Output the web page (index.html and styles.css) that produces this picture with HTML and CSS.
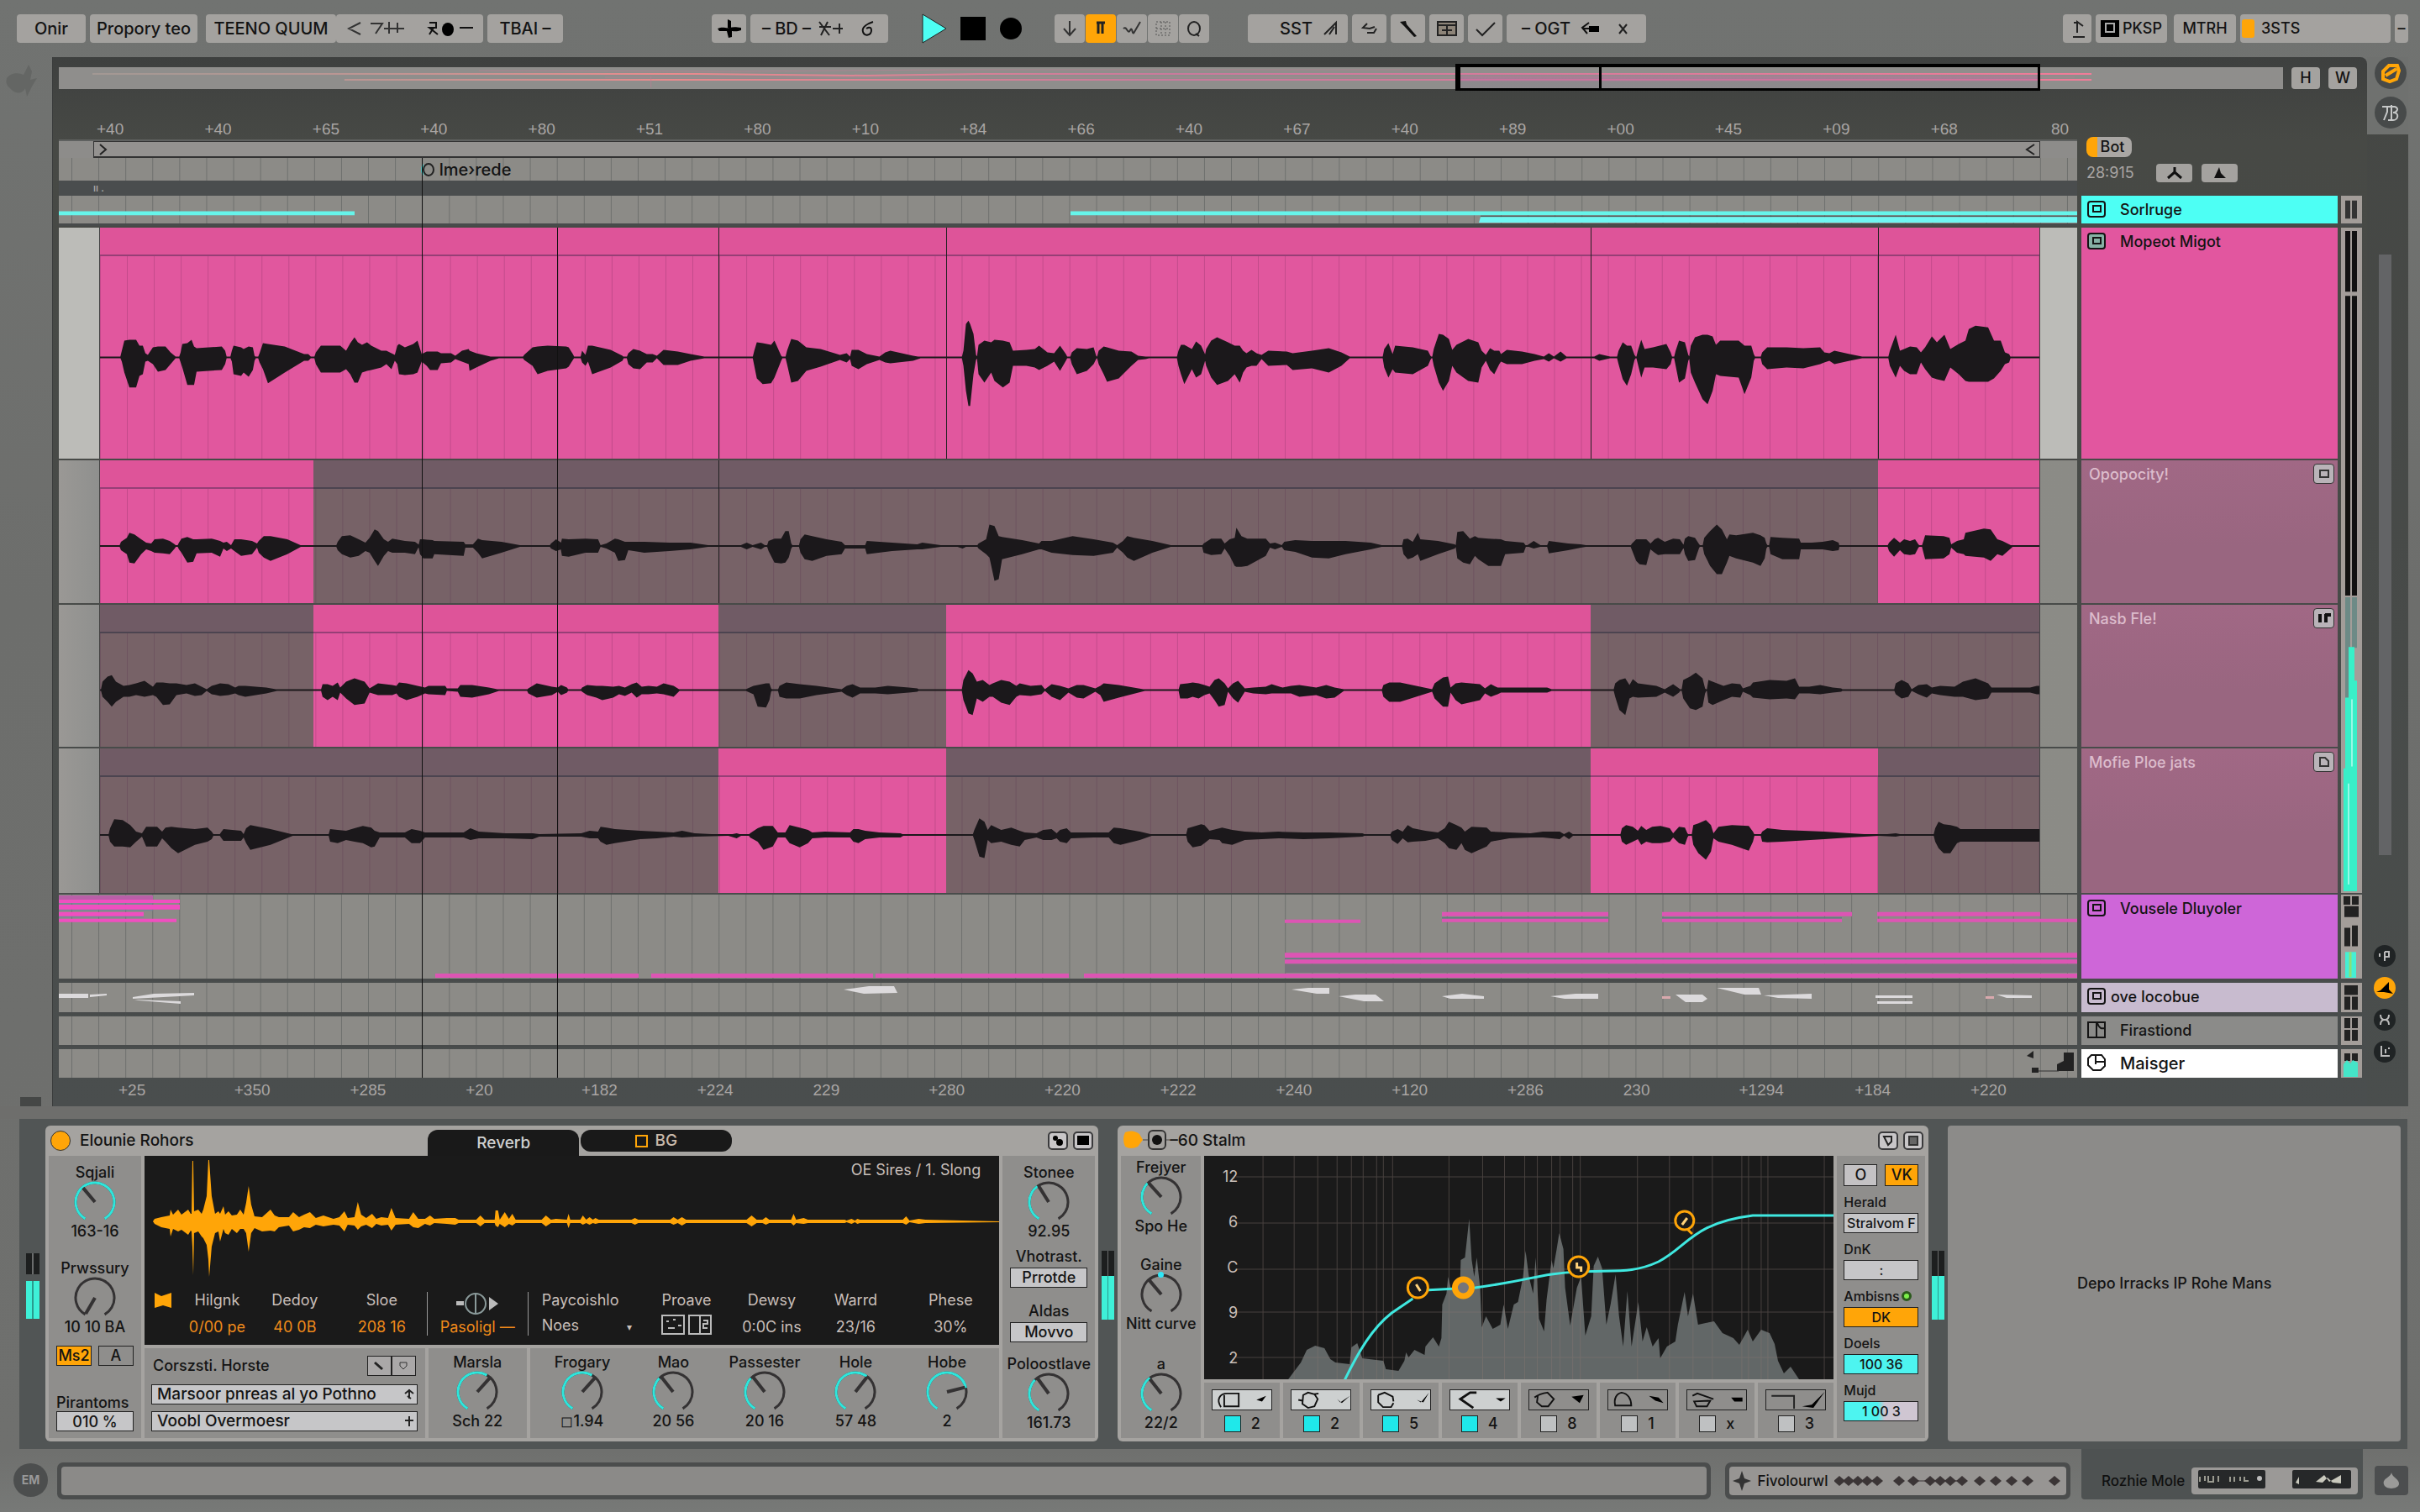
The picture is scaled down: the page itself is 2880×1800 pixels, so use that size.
FILE: index.html
```html
<!DOCTYPE html>
<html lang="en">
<head>
    <meta charset="UTF-8">
    <meta name="viewport" content="width=device-width, initial-scale=1.0">
    <title>Arrangement</title>
    <link rel="stylesheet" href="styles.css">
</head>
<body>
    <svg class="defs" aria-hidden="true">
        <symbol id="knob" viewBox="0 0 50 50">
            <circle class="knob-track" cx="25" cy="25" r="23" pathLength="360" transform="rotate(120 25 25)"/>
            <circle class="knob-value" cx="25" cy="25" r="23" pathLength="360" transform="rotate(120 25 25)"/>
            <line class="knob-hand" x1="25" y1="25" x2="25" y2="3"/>
        </symbol>
        <symbol id="clip-icon" viewBox="0 0 24 22">
            <rect x="2" y="2" width="20" height="18" rx="3" fill="none" stroke="currentColor" stroke-width="2"/>
            <rect x="8" y="7" width="9" height="7" fill="none" stroke="currentColor" stroke-width="2"/>
        </symbol>
    </svg>

    <header class="toolbar">
        <div class="group">
            <button class="btn w82">Onir</button>
            <button class="btn w128">Propory teo</button>
            <button class="btn w155 spaced">TEENO QUUM</button>
            <button class="btn w175 joined">
                <svg width="150" height="24" viewBox="0 0 150 24"><path d="M16 5 2 12l14 7M28 6h14l-8 12M50 4v14M44 12h24M60 5v12" fill="none" stroke="#333" stroke-width="2"/><path d="M98 5h8v6h-8l10 8M98 19l5-8" fill="none" stroke="#111" stroke-width="2"/><ellipse cx="120" cy="13" rx="7" ry="8"/><path d="M134 11h16" stroke="#111" stroke-width="2"/></svg>
            </button>
            <button class="btn w90">TBAI –</button>
        </div>
        <div class="group transport">
            <button class="btn w41" aria-label="Add"><svg width="30" height="22" viewBox="0 0 30 22"><path d="M1 11c6-3 10 0 14-1s8-1 14 0v3c-5 2-9 1-11 1v7l-4 1-2-8H3zM13 0l4 2v8h-4z"/></svg></button>
            <button class="btn w164">– BD –
                <svg width="70" height="24" viewBox="0 0 70 24"><path d="M2 4 14 20M12 4 4 20M2 10h14M18 12h12M26 6v12" fill="none" stroke="#222" stroke-width="2"/><path d="M66 4c-6 2-14 6-12 12s10 4 10-2-6-2-6-2" fill="none" stroke="#111" stroke-width="2"/></svg>
            </button>
            <button class="bare play" aria-label="Play"><svg width="30" height="36" viewBox="0 0 30 36"><path d="M1 1v34l28-17z" fill="#4dfff4" stroke="#222"/></svg></button>
            <button class="bare" aria-label="Stop"><svg width="30" height="28" viewBox="0 0 30 28"><path d="M0 0h30v28H0z"/></svg></button>
            <button class="bare" aria-label="Record"><svg width="28" height="26" viewBox="0 0 28 26"><circle cx="14" cy="13" r="13"/></svg></button>
        </div>
        <div class="group tight tools">
            <button class="btn w36" aria-label="Down"><svg width="20" height="24" viewBox="0 0 20 24"><path d="M10 3v17M3 12l7 8 7-8" fill="none" stroke="#333" stroke-width="2"/></svg></button>
            <button class="btn w36 on" aria-label="Loop"><svg width="16" height="24" viewBox="0 0 16 24"><path d="M3 5h10M5 5v13M10 5v13" stroke="#222" stroke-width="3"/></svg></button>
            <button class="btn w36" aria-label="Automation"><svg width="24" height="20" viewBox="0 0 24 20"><path d="M2 10c4-4 5 8 8 2s2 8 5 2l7-12" fill="none" stroke="#333" stroke-width="2"/></svg></button>
            <button class="btn w36" aria-label="Grid"><svg width="20" height="20" viewBox="0 0 20 20"><path d="M2 2h16v16H2zM2 10h16M8 2v16M13 2v16" fill="none" stroke="#555" stroke-dasharray="2 2"/></svg></button>
            <button class="btn w36" aria-label="Zoom"><svg width="22" height="24" viewBox="0 0 22 24"><ellipse cx="11" cy="12" rx="7" ry="8" fill="none" stroke="#222" stroke-width="2"/><path d="m13 18 4 3" stroke="#222" stroke-width="2"/></svg></button>
        </div>
        <div class="group modes">
            <button class="btn w119 end">SST <svg width="22" height="20" viewBox="0 0 22 20"><path d="M2 17 16 3v14M8 17 14 8" fill="none" stroke="#222" stroke-width="2"/></svg></button>
            <button class="btn w41" aria-label="Swap"><svg width="26" height="20" viewBox="0 0 26 20"><path d="M10 4 5 9l8 1 6-2M10 15h8l3-5" fill="none" stroke="#222" stroke-width="2"/></svg></button>
            <button class="btn w41" aria-label="Draw"><svg width="24" height="22" viewBox="0 0 24 22"><path d="m2 3 7-1 1 4 12 14-3 1L7 8z" fill="#111"/></svg></button>
            <button class="btn w41" aria-label="Keys"><svg width="26" height="20" viewBox="0 0 26 20"><path d="M2 2h22v16H2z" fill="#8d8478" stroke="#222" stroke-width="2"/><path d="M2 6h22M13 6v12M7 12h12" fill="none" stroke="#222" stroke-width="2"/></svg></button>
            <button class="btn w41" aria-label="Accept"><svg width="26" height="20" viewBox="0 0 26 20"><path d="m2 11 7 7L24 3" fill="none" stroke="#222" stroke-width="2"/></svg></button>
            <button class="btn w166">– OGT
                <svg width="64" height="20" viewBox="0 0 64 20"><path d="m14 3-8 6 6 7M6 10h14" fill="none" stroke="#111" stroke-width="2"/><path d="M14 7h12v7H14z"/><path d="m50 5 9 11M59 5l-9 11" stroke="#222" stroke-width="2"/></svg>
            </button>
        </div>
        <div class="group right">
            <button class="btn w34" aria-label="Metronome"><svg width="22" height="24" viewBox="0 0 22 24"><path d="M6 22h14M11 17V4l7 5M7 5h5" fill="none" stroke="#222" stroke-width="2"/></svg></button>
            <button class="btn w85"><svg width="22" height="20" viewBox="0 0 22 20"><path d="M0 0h22v20H0z"/><path d="M6 4h10v10H6z" fill="none" stroke="#aaa" stroke-width="2"/></svg>PKSP</button>
            <button class="btn w74 spaced-sm">MTRH</button>
            <button class="btn w179"><i class="lamp"></i>3STS</button>
            <button class="btn w16">–</button>
        </div>
    </header>

    <main class="workspace">
        <aside class="gutter">
            <svg width="40" height="48" viewBox="0 0 40 48"><path d="M2 18c6-8 16-6 20-4l6-12 4 8-2 10 8-2-6 10-6 12-2-10c-4 8-12 6-16 2S0 26 2 18z" fill="#646664"/></svg>
            <i></i>
        </aside>
        <section class="arrange">
            <div class="overview-row">
                <div class="overview">
                    <svg viewBox="0 0 2648 24" preserveAspectRatio="none">
                        <defs><linearGradient id="ov" gradientUnits="userSpaceOnUse" x1="0" y1="0" x2="2420" y2="0"><stop offset="0" stop-color="#b8a79e" stop-opacity=".4"/><stop offset=".3" stop-color="#ea8a8d"/><stop offset=".55" stop-color="#c87a9c"/><stop offset="1" stop-color="#f07c98"/></linearGradient></defs>
                        <path d="M40 8H760l200 2 140-2h1320" stroke="url(#ov)" stroke-width="2" fill="none"/>
                        <path d="M340 15H2420" stroke="url(#ov)" stroke-width="2" fill="none"/>
                        <path d="M500 4l300 1 260-2h540M650 12h1750M705 11v13" stroke="#bd7f95" fill="none" opacity=".6"/>
                    </svg>
                    <div class="view-box"></div>
                </div>
                <button class="btn hw">H</button>
                <button class="btn hw">W</button>
            </div>

            <div class="timeline">
                <div class="time-left">
                    <div class="ruler top">
                        <span>+40</span><span>+40</span><span>+65</span><span>+40</span><span>+80</span><span>+51</span><span>+80</span><span>+10</span><span>+84</span><span>+66</span><span>+40</span><span>+67</span><span>+40</span><span>+89</span><span>+00</span><span>+45</span><span>+09</span><span>+68</span><span>80</span>
                    </div>
                    <div class="loop-row"><div class="loop"><svg width="14" height="14" viewBox="0 0 14 14"><path d="m3 1 7 6-7 6" fill="none" stroke="#222" stroke-width="2"/></svg><svg width="14" height="14" viewBox="0 0 14 14"><path d="m12 1-9 6 9 6" fill="none" stroke="#222" stroke-width="2"/></svg></div></div>
                    <div class="marker-row grid"><div class="marker"><svg width="16" height="18" viewBox="0 0 16 18"><path d="M3 2a9 9 0 0 0 0 14z" fill="#4fc0bc"/><ellipse cx="9" cy="9" rx="6" ry="7" fill="none" stroke="#222" stroke-width="2"/></svg>lme›rede</div></div>
                    <div class="spacer">ıı .</div>
                </div>
                <div class="time-right">
                    <button class="bot">Bot</button>
                    <div class="nav"><span>28:915</span>
                        <button class="btn" aria-label="Up"><svg width="22" height="16" viewBox="0 0 22 16"><path d="M11 1v7M11 7l-8 7M11 7l8 7" stroke="#111" stroke-width="3"/></svg></button>
                        <button class="btn" aria-label="Down"><svg width="22" height="16" viewBox="0 0 22 16"><path d="M10 1l2 7 6 6H4z" fill="#111"/></svg></button>
                    </div>
                </div>
            </div>

            <div class="tracks">
                <div class="lane grid thin">
                    <svg class="notes" viewBox="0 0 2402 34" preserveAspectRatio="none"><path d="M0 19h352v5H0zM1204 19h1198v5H1204z" fill="#66f4ea"/><path d="M1692 26h710v7h-712z" fill="#6ff6f2"/><path d="M1692 25h710" stroke="#444"/></svg>
                </div>
                <div class="head cyan thin"><svg class="ico"><use href="#clip-icon"/></svg>Sorlruge</div>
                <div class="meter thin"><svg viewBox="0 0 25 34" preserveAspectRatio="none"><path d="M5 6h6v22H5zM13 6h6v22h-6z" fill="#333"/></svg></div>

                <div class="lane comp master">
                    <div class="clips"><i></i><i></i><i></i><i></i><i></i><i></i><svg class="wave" id="wave0" viewBox="-3 -121 2309 242" preserveAspectRatio="none"></svg></div>
                </div>
                <div class="head pink"><svg class="ico"><rect x="2" y="2" width="20" height="18" rx="3" fill="#86b0a4"/><use href="#clip-icon"/></svg>Mopeot Migot</div>
                <div class="meter tall">
                    <svg viewBox="0 0 25 790" preserveAspectRatio="none">
                        <path d="M5 4h6v72H5zM13 4h6v72h-6zM5 81h6v356H5zM13 81h6v356h-6z" fill="#111"/>
                        <path d="M5 439h6v120H5zM13 439h6v60h-6z" fill="#6d8a86"/>
                        <path d="M9 498h7v40h3v250H3V642h2v-84h4z" fill="#38efc8"/>
                        <path d="M9 660v120M13 560v80" stroke="#9af8e6" stroke-width="2"/>
                    </svg>
                </div>

                <div class="lane comp">
                    <div class="clips take1"><i class="on"></i><i></i><i></i><i></i><i></i><i class="on"></i><svg class="wave" id="wave1" viewBox="-3 -69 2309 138" preserveAspectRatio="none"></svg></div>
                </div>
                <div class="head take">Opopocity! <button aria-label="Take"><svg width="14" height="12" viewBox="0 0 14 12"><path d="M2 2h10v8H2z" fill="none" stroke="#333" stroke-width="2"/></svg></button></div>

                <div class="lane comp">
                    <div class="clips"><i></i><i class="on"></i><i></i><i class="on"></i><i></i><i></i><svg class="wave" id="wave2" viewBox="-3 -68 2309 136" preserveAspectRatio="none"></svg></div>
                </div>
                <div class="head take">Nasb Fle! <button aria-label="Take"><svg width="16" height="12" viewBox="0 0 16 12"><path d="M3 1v10M10 1v10M9 2h7" stroke="#111" stroke-width="4"/></svg></button></div>

                <div class="lane comp">
                    <div class="clips"><i></i><i></i><i class="on"></i><i></i><i class="on"></i><i></i><svg class="wave" id="wave3" viewBox="-3 -70 2309 140" preserveAspectRatio="none"></svg></div>
                </div>
                <div class="head take">Mofie Ploe jats <button aria-label="Take"><svg width="14" height="14" viewBox="0 0 14 14"><path d="M2 2h6l4 4v6H2z" fill="none" stroke="#333" stroke-width="2"/></svg></button></div>

                <div class="lane grid thin">
                    <svg class="notes" viewBox="0 0 2402 101" preserveAspectRatio="none">
                        <path d="M0 1h112v5H0z" fill="#b95fa8"/>
                        <path d="M0 6h144v4H0zM0 12h144v6H0zM0 21h101v5H0zM0 29h140v4H0z" fill="#f04fc0"/>
                        <path d="M0 11h112M0 19h112M0 27h101" stroke="#6f86a0"/>
                        <path d="M1459 83h943v11h-943z" fill="#77747c"/>
                        <path d="M1459 77h943M1646 28h198M1908 28h214" stroke="#5f7f80" stroke-width="2"/>
                        <path d="M448 95h242v5H448zM705 95h264v5H705zM972 95h230v5H972zM1220 95h1182v5H1220zM1459 30h90v4h-90zM1646 21h198v5h-198zM1646 29h198v4h-198zM1908 21h226v5h-226zM1908 29h214v4h-214zM2164 21h194v5h-194zM2164 29h238v4h-238zM1459 70h943v6h-943zM1459 78h943v5h-943z" fill="#dd55b4"/>
                    </svg>
                </div>
                <div class="head purple thin"><svg class="ico"><use href="#clip-icon"/></svg>Vousele Dluyoler</div>
                <div class="meter thin"><svg viewBox="0 0 25 101" preserveAspectRatio="none"><path d="M3 2h8v10H3zM13 2h8v10h-8zM4 14h17v13H4zM4 40h7v22H4zM13 37h7v25h-7z" fill="#222"/><path d="M5 69h13v31H5z" fill="#45efd4"/><path d="M11 69v30" stroke="#8adf7a" stroke-width="3"/></svg></div>

                <div class="lane grid thin">
                    <svg class="notes" viewBox="0 0 2402 35" preserveAspectRatio="none"><path d="M0 13h35v5H0zM37 14l20-1v2l-20 2zM88 17l25-4 48-1v3l-73 4zM90 20l55 2v3l-50-4zM934 8l30-4h30l4 8-40 1zM1467 8l20-2h25v7h-15zM1523 16l20-2h24l10 8h-24zM1646 16l24-3 26 3v3h-40zM1775 16l30-3h27v6h-40zM1924 14h32l6 5-6 4h-20zM1973 6h50l3 8h-20zM2029 15l57-2v6l-40-1zM2162 15h44v3h-44zM2164 22h42v3h-42zM2306 14l42 1v3h-30z" fill="#dcdadc"/><path d="M1908 16h10v3h-10zM2293 16h10v3h-10z" fill="#d8a9ad"/></svg>
                </div>
                <div class="head lavender thin near"><svg class="ico"><use href="#clip-icon"/></svg>ove Iocobue</div>
                <div class="meter thin"><svg viewBox="0 0 25 34" preserveAspectRatio="none"><path d="M4 3h16v11H4zM4 16h7v15H4zM13 16h7v15h-7z" fill="#222"/></svg></div>

                <div class="lane grid thin"></div>
                <div class="head gray thin"><svg class="ico" viewBox="0 0 24 22"><path d="M2 2h20v18H2zM12 2v18M13 3c2 6 5 7 8 6" fill="none" stroke="currentColor" stroke-width="2"/></svg>Firastiond</div>
                <div class="meter thin"><svg viewBox="0 0 25 34" preserveAspectRatio="none"><path d="M4 2h7v12H4zM13 2h7v12h-7zM4 16h7v13H4zM13 16h7v13h-7z" fill="#222"/></svg></div>

                <div class="lane grid last">
                    <svg class="notes corner" viewBox="0 0 60 34"><path d="M2 8l8-6v9zM8 22h8v6H8zM46 4h12v22H38v-8l8-4z" fill="#222"/><path d="M16 26h24" stroke="#333"/></svg>
                </div>
                <div class="head white"><svg class="ico" viewBox="0 0 24 22"><path d="M6 2h12l4 5v8l-5 5H8L2 14V6zM11 3v10M11 10h10" fill="none" stroke="currentColor" stroke-width="2"/></svg>Maisger</div>
                <div class="meter"><svg viewBox="0 0 25 34" preserveAspectRatio="none"><path d="M4 5h7v9H4zM13 5h7v9h-7z" fill="#222"/><path d="M3 33V18l4-5 4 4 3-4 6 3v17z" fill="#45e5c8"/></svg></div>

                <div class="playheads"><i class="start"></i><i class="pos"></i></div>
            </div>

            <div class="ruler beats">
                <span>+25</span><span>+350</span><span>+285</span><span>+20</span><span>+182</span><span>+224</span><span>229</span><span>+280</span><span>+220</span><span>+222</span><span>+240</span><span>+120</span><span>+286</span><span>230</span><span>+1294</span><span>+184</span><span>+220</span>
            </div>
        </section>
        <aside class="rail">
            <div class="rail-tab">
                <button class="round big" aria-label="Session"><svg width="28" height="28" viewBox="0 0 28 28"><path d="M5 12 12 5h10l2 6-3 10-8 3-8-3zM8 17 21 9" fill="none" stroke="#ffa508" stroke-width="4"/></svg></button>
                <button class="round big" aria-label="Arrange"><svg width="26" height="26" viewBox="0 0 26 26"><path d="M3 6h6v6l-4 10M14 4v18M10 6h8c6 2 2 7-2 7 8 0 6 9 0 9h-6" fill="none" stroke="#c6c8c8" stroke-width="2"/></svg></button>
            </div>
            <div class="scroll"></div>
            <div class="rail-icons">
                <button class="round" aria-label="Info"><svg width="18" height="18" viewBox="0 0 18 18"><path d="M3 6v4M9 4v11M9 4h5v6H9" fill="none" stroke="#bbb" stroke-width="2"/></svg></button>
                <button class="round lit" aria-label="Mix"><svg width="22" height="18" viewBox="0 0 22 18"><path d="M1 14h9l11 2-5-5V2L6 12z"/></svg></button>
                <button class="round" aria-label="Crossfade"><svg width="18" height="18" viewBox="0 0 18 18"><path d="M4 3c0 5 3 6 5 6s5-1 5-6M4 15c0-5 3-6 5-6s5 1 5 6" fill="none" stroke="#bbb" stroke-width="2"/></svg></button>
                <button class="round" aria-label="Sends"><svg width="18" height="18" viewBox="0 0 18 18"><path d="M5 2v12h10M10 6v5M14 4v2" fill="none" stroke="#bbb" stroke-width="2"/></svg></button>
            </div>
        </aside>
    </main>
    <div class="hscroll"></div>

    <section class="devices">
        <div class="level first"><b></b><i></i></div>
        <article class="device reverb">
            <header>
                <i class="power"></i><h2>Elounie Rohors</h2>
                <button class="tab active">Reverb</button>
                <button class="tab"><i class="square"></i>BG</button>
                <div class="dev-tools">
                    <button aria-label="Swap"><svg width="16" height="16" viewBox="0 0 16 16"><circle cx="5" cy="5" r="3"/><circle cx="10" cy="10" r="4"/></svg></button>
                    <button aria-label="Save"><svg width="16" height="14" viewBox="0 0 16 14"><path d="M1 1h14v11H1z"/></svg></button>
                </div>
            </header>
            <div class="panel col">
                <div class="cell"><span>Sqjali</span><svg class="knob full" style="--v:1;--a:-40deg"><use href="#knob"/></svg><span>163-16</span></div>
                <div class="cell second"><span>Prwssury</span><svg class="knob" style="--v:0;--a:-150deg"><use href="#knob"/></svg><span>10 10 BA</span></div>
                <div class="pair"><button class="sq on">Ms2</button><button class="sq">A</button></div>
                <label class="bottom-field">Pirantoms<input class="field" value="010 %"></label>
            </div>
            <div class="screen">
                <svg class="ir" id="ir" viewBox="0 -78 1018 156" preserveAspectRatio="none"></svg>
                <div class="screen-title">OE Sires / 1. Slong</div>
                <div class="params">
                    <div><svg width="20" height="20" viewBox="0 0 20 20"><path d="M0 1l8 4 12-4v18l-10-3-10 3z" fill="#ffa508"/></svg></div>
                    <div><span>Hilgnk</span><b>0/00 pe</b></div>
                    <div><span>Dedoy</span><b>40 0B</b></div>
                    <div><span>Sloe</span><b>208 16</b></div>
                    <div class="divided"><svg width="52" height="28" viewBox="0 0 52 28"><path d="M1 11h9v5H1zM40 6l11 8-11 8z" fill="#bbb"/><circle cx="24" cy="14" r="12" fill="none" stroke="#8a9a9a" stroke-width="2"/><path d="M24 3v22" stroke="#8a9a9a" stroke-width="2"/></svg><b>Pasoligl —</b></div>
                    <div class="divided start"><span>Paycoishlo</span><em>Noes <small>▾</small></em></div>
                    <div><span>Proave</span><svg width="60" height="26" viewBox="0 0 60 26"><path d="M1 2h26v22H1zM33 2h26v22H33zM46 2v22M6 9h3M14 7h3M8 17h8M20 14h4M50 8h5v4h-5v5h5" fill="none" stroke="#bbb" stroke-width="2"/></svg></div>
                    <div><span>Dewsy</span><em>0:0C ins</em></div>
                    <div><span>Warrd</span><em>23/16</em></div>
                    <div><span>Phese</span><em>30%</em></div>
                </div>
            </div>
            <div class="panel side">
                <div class="cell"><span>Stonee</span><svg class="knob" style="--v:.38;--a:-32deg"><use href="#knob"/></svg><span>92.95</span></div>
                <label class="opt">Vhotrast.<select class="field"><option>Prrotde</option></select></label>
                <label class="opt">Aldas<select class="field"><option>Movvo</option></select></label>
                <div class="cell low"><span>Poloostlave</span><svg class="knob" style="--v:.35;--a:-36deg"><use href="#knob"/></svg><span>161.73</span></div>
            </div>
            <div class="lower">
                <div class="panel preset">
                    <div class="preset-head">Corszsti. Horste <span><button aria-label="Edit"><svg width="14" height="12" viewBox="0 0 14 12"><path d="m2 2 9 8" stroke="#222" stroke-width="3"/></svg></button><button aria-label="Lock"><svg width="14" height="12" viewBox="0 0 14 12"><path d="M3 2h8v4l-4 4-4-4z" fill="none" stroke="#333"/></svg></button></span></div>
                    <div class="pick"><select class="field" aria-label="Impulse"><option>Marsoor pnreas al yo Pothno</option></select><svg width="14" height="14" viewBox="0 0 14 14"><path d="M7 1v11M2 6l5-4 5 4M5 9l4 3" fill="none" stroke="#222" stroke-width="2"/></svg></div>
                    <div class="pick"><select class="field" aria-label="Overlay"><option>Voobl Overmoesr</option></select><svg width="14" height="14" viewBox="0 0 14 14"><path d="M7 1v12M2 6h10" fill="none" stroke="#222" stroke-width="2"/></svg></div>
                </div>
                <div class="panel knobs one"><div class="cell"><span>Marsla</span><svg class="knob" style="--v:.6;--a:42deg"><use href="#knob"/></svg><span>Sch 22</span></div></div>
                <div class="panel knobs">
                    <div class="cell"><span>Frogary</span><svg class="knob" style="--v:.6;--a:42deg"><use href="#knob"/></svg><span>◻1.94</span></div>
                    <div class="cell"><span>Mao</span><svg class="knob" style="--v:.35;--a:-38deg"><use href="#knob"/></svg><span>20 56</span></div>
                    <div class="cell"><span>Passester</span><svg class="knob" style="--v:.35;--a:-38deg"><use href="#knob"/></svg><span>20 16</span></div>
                    <div class="cell"><span>Hole</span><svg class="knob" style="--v:.62;--a:38deg"><use href="#knob"/></svg><span>57 48</span></div>
                    <div class="cell"><span>Hobe</span><svg class="knob" style="--v:.76;--a:76deg"><use href="#knob"/></svg><span>2</span></div>
                </div>
            </div>
        </article>
        <div class="level"><b></b><i></i></div>
        <article class="device eq">
            <header>
                <svg width="56" height="28" viewBox="0 0 56 28"><path d="M3 4q9-4 17 2l4 7-6 8q-8 4-15 0-4-9 0-17z" fill="#ffa508"/><path d="M24 13h32" stroke="#444"/><rect x="31" y="2" width="20" height="22" rx="5" fill="#a3a19e" stroke="#333" stroke-width="2"/><circle cx="41" cy="13" r="6" fill="#111"/></svg>
                <h2>–60 Stalm</h2>
                <div class="dev-tools">
                    <button aria-label="Swap"><svg width="16" height="16" viewBox="0 0 16 16"><path d="M3 3h9v6l-4 4-2-4z" fill="none" stroke="#222" stroke-width="2"/></svg></button>
                    <button aria-label="Save"><svg width="16" height="16" viewBox="0 0 16 16"><path d="M3 3h10v10H3z" fill="#666" stroke="#333" stroke-width="2"/></svg></button>
                </div>
            </header>
            <div class="panel col">
                <div class="cell"><span>Frejyer</span><svg class="knob" style="--v:.35;--a:-42deg"><use href="#knob"/></svg><span>Spo He</span></div>
                <div class="cell second"><span>Gaine</span><i class="dot"></i><svg class="knob" style="--v:0;--a:-40deg"><use href="#knob"/></svg><span>Nitt curve</span></div>
                <div class="cell low"><span>a</span><svg class="knob" style="--v:.38;--a:-38deg"><use href="#knob"/></svg><span>22/2</span></div>
            </div>
            <div class="screen graph">
                <svg viewBox="0 0 748 266" preserveAspectRatio="none">
                    <path d="M100 266 109 254 115 246 122 231 132 226 143 229 150 242 156 246 173 248 175 228 182 223 188 241 213 244 216 254 231 256 238 244 240 234 243 240 250 231 262 237 263 227 272 216 279 227 282 217 283 177 288 164 290 144 293 157 304 157 305 124 310 121 315 75 318 124 321 144 324 121 328 157 330 204 335 191 343 206 352 201 356 177 361 206 368 177 373 174 379 144 382 113 386 144 391 164 394 121 398 194 404 209 407 171 413 124 415 134 419 111 422 92 427 111 429 157 435 202 443 157 448 144 453 214 460 191 463 131 468 120 473 134 478 201 483 177 489 141 493 190 498 227 503 161 508 227 516 174 521 221 526 204 533 227 540 217 542 241 550 227 560 221 563 201 571 162 575 191 581 164 587 201 596 199 606 197 616 211 629 217 636 225 646 207 652 221 662 207 672 211 678 224 682 244 689 259 697 251 707 266z" fill="#626767"/>
                    <path d="M38 25H748M38 80H748M38 135H748M38 186H748M38 240H748M70 0V266M107 0V266M135 0V266M158 0V266M175 0V266M189 0V266M205 0V266M213 0V266M224 0V266M291 0V266M331 0V266M357 0V266M381 0V266M396 0V266M413 0V266M423 0V266M438 0V266M447 0V266M515 0V266M553 0V266M581 0V266M604 0V266M639 0V266M647 0V266M662 0V266M670 0V266M737 0V266" stroke="#8b7a74" opacity=".4"/>
                    <path d="M167 267C184 232 200 205 223 187L248 170M262 160 300 158 322 157C388 148 400 140 445 138 490 136 510 140 540 126 575 108 580 80 652 71H748" fill="none" stroke="#3fe8e0" stroke-width="3"/>
                    <g fill="#1a1a1a" stroke="#ffa508" stroke-width="3"><circle cx="254" cy="157" r="12"/><circle cx="308" cy="157" r="10" fill="#77757a" stroke-width="7"/><circle cx="445" cy="132" r="12"/><circle cx="571" cy="77" r="11"/><path d="m574 87 6 6"/></g>
                    <path d="m252 153 5 8M443 127v6h5v5M568 82l6-8" stroke="#ffd27a" stroke-width="3" fill="none"/>
                </svg>
                <div class="scale"><span>12</span><span>6</span><span>C</span><span>9</span><span>2</span></div>
            </div>
            <div class="panel side eq-side">
                <div class="pair"><button class="sq light">O</button><button class="sq on">VK</button></div>
                <label class="opt">Herald<select class="field"><option>Stralvom F</option></select></label>
                <label class="opt">DnK<input class="field" value=":"></label>
                <label class="opt"><span>Ambisns<i class="led"></i></span><button class="field on">DK</button></label>
                <label class="opt">Doels<input class="field cyan" value="100 36"></label>
                <label class="opt">Mujd<input class="field half" value="1 00 3"></label>
            </div>
            <div class="bands">
                <div class="panel band"><button class="type lit" aria-label="Low cut"><svg viewBox="0 0 72 24"><path d="M10 21C4 12 8 4 18 4h14v16H14V6" fill="none" stroke="#111" stroke-width="2"/><path d="M54 12l12-5-5 7z"/></svg></button><label><input type="checkbox" checked>2</label></div>
                <div class="panel band"><button class="type lit" aria-label="Bell"><svg viewBox="0 0 72 24"><path d="M14 6 20 3l8 2 4 6-4 9-8 2-7-5zM28 5l5-1M8 12l5 1" fill="none" stroke="#111" stroke-width="2"/><path d="M56 11l4 4 12-8-10 9z"/></svg></button><label><input type="checkbox" checked>2</label></div>
                <div class="panel band"><button class="type lit" aria-label="Bell"><svg viewBox="0 0 72 24"><path d="M8 6 16 3l10 5 1 6M8 6v9l6 6 10 0 3-5" fill="none" stroke="#111" stroke-width="2"/><path d="M56 12l5 3 10-12-7 12z"/></svg></button><label><input type="checkbox" checked>5</label></div>
                <div class="panel band"><button class="type lit" aria-label="Notch"><svg viewBox="0 0 72 24"><path d="M32 3H24L12 11l16 11" fill="none" stroke="#111" stroke-width="3"/><path d="M56 10h12l-6 4z"/></svg></button><label><input type="checkbox" checked>4</label></div>
                <div class="panel band"><button class="type" aria-label="Bell"><svg viewBox="0 0 72 24"><path d="M6 9c4-3 8-5 16-6l8 8-7 9h-8l-6-5 1-8" fill="none" stroke="#111" stroke-width="2"/><path d="M52 8l15-2-5 10z"/></svg></button><label><input type="checkbox">8</label></div>
                <div class="panel band"><button class="type" aria-label="Shelf"><svg viewBox="0 0 72 24"><path d="M8 19C6 10 10 4 16 3c8 1 12 8 12 16z" fill="none" stroke="#111" stroke-width="2"/><path d="M50 7l12 2 6 7-10-3z"/></svg></button><label><input type="checkbox">1</label></div>
                <div class="panel band"><button class="type" aria-label="High cut"><svg viewBox="0 0 72 24"><path d="M6 7 12 4l20 7M8 14l20-1-4 7H11z" fill="none" stroke="#111" stroke-width="2"/><path d="M54 9h14v5H58z"/></svg></button><label><input type="checkbox">x</label></div>
                <div class="panel band"><button class="type" aria-label="Shelf"><svg viewBox="0 0 72 24"><path d="M6 7h28v16" fill="none" stroke="#222" stroke-width="2"/><path d="M44 20l12-2L72 2 58 22z"/></svg></button><label><input type="checkbox">3</label></div>
            </div>
        </article>
        <div class="level"><b></b><i></i></div>
        <div class="drop">Depo Irracks IP Rohe Mans</div>
    </section>

    <footer class="status">
        <button class="round em">EM</button>
        <div class="frame grow"><div class="inner"></div></div>
        <div class="frame mini"><div class="inner"><svg width="22" height="26" viewBox="0 0 22 26"><path d="M11 1l3 9 8 3-8 3-3 9-3-9-8-3 8-3z" fill="#333"/></svg>Fivolourwl<svg id="beads" width="272" height="16" viewBox="0 0 272 16"></svg></div></div>
        <div class="chain"><span>Rozhie Mole</span>
            <div class="chips"><b><svg width="80" height="16" viewBox="0 0 80 16"><path d="M2 5v6M8 4v6M12 4v7h6V4M24 4v7M38 5v6M43 5v6M50 5v5M55 5v5h5" fill="none" stroke="#9a9a90" stroke-width="2"/><circle cx="73" cy="7" r="3" fill="#bbb"/></svg></b><b><svg width="70" height="20" viewBox="0 0 70 20"><path d="M4 14l4-7v9zM28 13l10-8 6 8 14-8v10l-10-1-6-6-6 6z" fill="#c9c9bd"/></svg></b></div>
        </div>
        <button class="tip" aria-label="Help"><svg width="24" height="22" viewBox="0 0 24 22"><path d="M12 1c1 6 10 8 9 14s-16 7-18 0S11 7 12 1z" fill="#9b9b99"/></svg></button>
    </footer>
    <script src="script.js"></script>
</body>
</html>
```

FILE: styles.css
```css
* {
    box-sizing: border-box;
}
body {
    margin: 0;
    min-height: 100vh;
    display: flex;
    flex-direction: column;
    font-family: Inter, "Liberation Sans", sans-serif;
    font-size: 18px;
    font-weight: 500;
    line-height: 20px;
    color: #141414;
    background: linear-gradient(#717371, #6d6e6c 40%, #6f706e 96%, #777977);
}
button, input, select {
    font: inherit;
    color: inherit;
    margin: 0;
    padding: 0;
    border: 0;
    background: none;
}
button {
    display: flex;
    align-items: center;
    justify-content: center;
    white-space: nowrap;
}
svg {
    display: block;
    flex: none;
}
.defs {
    position: absolute;
    width: 0;
    height: 0;
}

/* toolbar */
.toolbar {
    display: flex;
    height: 68px;
    padding: 17px 14px 17px 20px;
    font-size: 20px;
}
.group {
    display: flex;
    align-items: center;
    gap: 5px;
}
.group.tight {
    gap: 1px;
}
.btn {
    height: 34px;
    gap: 8px;
    border-radius: 4px;
    background: #a4a29f;
    overflow: hidden;
}
.btn.on {
    background: #ffa508;
}
.spaced { margin-left: 5px; }
.spaced-sm { margin-left: 3px; }
.joined { margin-left: -5px; }
.btn.end {
    justify-content: flex-end;
    padding-right: 8px;
    gap: 12px;
}
.w16 { width: 16px; }
.w34 { width: 34px; }
.w36 { width: 36px; }
.w41 { width: 41px; }
.w74 { width: 74px; }
.w82 { width: 82px; }
.w85 { width: 85px; gap: 4px; }
.w90 { width: 90px; }
.w119 { width: 119px; }
.w128 { width: 128px; }
.w155 { width: 155px; }
.w164 { width: 164px; }
.w166 { width: 166px; }
.w175 { width: 175px; }
.w179 { width: 179px; justify-content: flex-start; }
.lamp {
    width: 15px;
    height: 22px;
    margin-left: 2px;
    border-radius: 3px;
    background: #ffa508;
}
.transport { margin-left: 177px; }
.transport .play { margin-left: 35px; }
.transport .bare + .bare { margin-left: 11px; }
.tools { margin-left: 38px; }
.modes { margin-left: 46px; }
.right { margin-left: auto; font-size: 18px; }

/* arrangement */
.workspace {
    display: flex;
    margin-right: 14px;
}
.gutter {
    width: 62px;
    display: flex;
    flex-direction: column;
    justify-content: space-between;
    padding: 7px 13px 0 6px;
}
.gutter i {
    width: 25px;
    height: 11px;
    margin-left: 18px;
    background: #454746;
}
.arrange {
    flex: 1;
    min-width: 0;
    padding: 12px 6px 0 7px;
    border-left: 1px solid #3a3c3c;
    border-top-right-radius: 8px;
    background: linear-gradient(#3e403f, #474945 8%, #484b49 60%, #4a4e4e);
}
.overview-row {
    display: flex;
    gap: 10px;
    padding-right: 6px;
}
.overview {
    flex: 1;
    height: 26px;
    position: relative;
    background: #8f8e8c;
}
.overview svg {
    width: 100%;
    height: 24px;
}
.view-box {
    position: absolute;
    top: -4px;
    bottom: -2px;
    left: 62.8%;
    width: 26.3%;
    border: 3px solid #000;
    border-width: 4px 3px 3px 6px;
    background: linear-gradient(#000, #000) 24% 0 / 3px 100% no-repeat, linear-gradient(rgba(190, 120, 165, 0) 30%, rgba(190, 110, 160, .6) 60%, rgba(140, 135, 140, .8) 70%);
}
.hw {
    width: 34px;
    height: 26px;
}
.timeline {
    display: grid;
    grid-template-columns: 1fr 334px;
    column-gap: 5px;
    height: 127px;
}
.ruler {
    display: flex;
    color: #a9a5a3;
    font-family: "Liberation Sans", sans-serif;
    font-size: 19px;
    font-weight: 400;
    white-space: nowrap;
}
.ruler span {
    flex: 1 1 0;
}
.ruler.top {
    height: 62px;
    padding: 38px 10px 0 45px;
    border-bottom: 2px solid #5f6160;
}
.ruler.top span:last-child {
    flex: 0 0 36px;
    text-align: right;
}
.ruler.beats {
    height: 34px;
    padding: 5px 339px 0 71px;
}
.ruler.beats span:last-child { flex: 0 0 127px; }
.loop-row {
    height: 20px;
    padding: 0 44px 0 41px;
    background: #8d8c8a;
}
.loop {
    display: flex;
    align-items: center;
    justify-content: space-between;
    height: 20px;
    padding: 0 4px;
    border: 1px solid #333;
    border-bottom-width: 2px;
    background: #949290;
}
.grid {
    padding: 0 12px 0 15px;
    background: #8c8b87 linear-gradient(90deg, rgba(40, 48, 50, .3) 1px, transparent 1px) 0 0 / calc(100% / 74) 100% repeat-x content-box border-box;
}
.marker-row {
    height: 27px;
}
.marker {
    display: flex;
    align-items: center;
    gap: 6px;
    height: 27px;
    margin-left: 17.5%;
    font-size: 20px;
}
.spacer {
    height: 18px;
    padding-left: 41px;
    font-size: 12px;
    line-height: 18px;
    color: #aaa;
    background: #4a4d4e;
}
.time-right {
    padding: 57px 0 0 6px;
}
.bot {
    width: 54px;
    height: 24px;
    border-radius: 8px;
    background: linear-gradient(90deg, #ffa508 13px, #aaa7a4 13px);
    padding-left: 8px;
}
.nav {
    display: flex;
    align-items: center;
    margin-top: 8px;
    color: #a9a5a3;
    font-weight: 400;
}
.nav span {
    width: 71px;
}
.nav .btn {
    width: 43px;
    height: 22px;
    margin: 0 11px 0 12px;
    color: #111;
}
.nav .btn + .btn { margin-left: 0; }

.tracks {
    position: relative;
    display: grid;
    grid-template-columns: 1fr 305px 25px;
    grid-template-rows: 36px 275px 170px 169px 172px 103px 38px 37px 34px;
    gap: 2px 4px;
}
.lane, .head {
    min-width: 0;
}
.lane {
    grid-column: 1;
    margin-right: 1px;
}
.head { grid-column: 2; }
.meter { grid-column: 3; }
.thin {
    border-bottom: 3px solid #484b4b;
}
.lane.comp {
    padding: 0 44px 0 48px;
    background: linear-gradient(90deg, #9a9895, #8f908e 48px, #8b8b86);
}
.lane.master {
    background: #bcbcb8;
}
.clips {
    display: grid;
    grid-template-columns: 254fr 482fr 271fr 768fr 342fr 192fr;
    height: 100%;
    border-left: 1px solid #444;
    border-right: 1px solid #444;
}
.clips > i {
    grid-row: 1;
    background: linear-gradient(#705b65 32px, #4c4450 32px, #4c4450 34px, #776267 34px);
}
.clips > i:nth-child(1) { grid-column: 1; }
.clips > i:nth-child(2) { grid-column: 2; }
.clips > i:nth-child(3) { grid-column: 3; }
.clips > i:nth-child(4) { grid-column: 4; }
.clips > i:nth-child(5) { grid-column: 5; }
.clips > i:nth-child(6) { grid-column: 6; }
.clips > i.on, .master .clips > i {
    background: linear-gradient(#de5499 32px, #963f76 32px, #963f76 34px, #e1579e 34px);
}
.master .clips > i:nth-child(n+3), .take1 > i:nth-child(3) {
    border-left: 1px solid #222;
}
.wave {
    grid-column: 1 / -1;
    grid-row: 1;
    width: 100%;
    height: calc(100% - 34px);
    margin-top: 34px;
    background: linear-gradient(90deg, rgba(70, 20, 60, .2) 1px, transparent 1px) 0 0 / calc(100% / 72) 100%;
    fill: #1b181b;
}
.notes {
    width: calc(100% + 27px);
    height: 100%;
    margin-left: -15px;
}
.notes.corner {
    width: 60px;
    height: 34px;
    margin-left: auto;
    margin-right: -10px;
}
.head {
    padding: 7px 10px 0 46px;
    position: relative;
    white-space: nowrap;
}
.head .ico {
    position: absolute;
    left: 6px;
    top: 5px;
    width: 24px;
    height: 22px;
}
.head.near { padding-left: 35px; }
.cyan { background: #4dfff4; }
.pink { background: #e2569f; }
.take {
    display: flex;
    justify-content: space-between;
    padding: 7px 4px 0 9px;
    color: #dcbccc;
    background: linear-gradient(#a16885, #996680 60%);
}
.take button {
    width: 25px;
    height: 24px;
    margin-top: -3px;
    border: 1px solid #333;
    border-radius: 4px;
    background: #b9b3b8;
}
.purple { background: #ce66d8; }
.lavender { background: #c8bbcf; }
.gray { background: #8b8b89; }
.white { background: #fff; font-size: 20px; }
.meter {
    background: #a39d99;
}
.meter svg {
    width: 100%;
    height: 100%;
}
.meter.tall { grid-row: 2 / span 4; }
.playheads {
    position: absolute;
    top: 0;
    bottom: 0;
    left: 0;
    right: 339px;
}
.playheads i {
    position: absolute;
    top: 0;
    bottom: 0;
    width: 1px;
    background: #111;
}
.playheads .start { left: 18%; top: -45px; }
.playheads .pos { left: 24.7%; top: 38px; }

.rail {
    width: 49px;
    display: flex;
    flex-direction: column;
    background: linear-gradient(#454744, #4a4e4d);
}
.rail-tab {
    display: flex;
    flex-direction: column;
    align-items: center;
    gap: 9px;
    height: 92px;
    padding-left: 6px;
    background: #6f716f;
}
.round {
    width: 26px;
    height: 26px;
    border-radius: 50%;
    background: #202425;
}
.round.lit { background: #ffa508; }
.round.big {
    width: 38px;
    height: 38px;
    background: #474a4a;
}
.scroll {
    width: 15px;
    height: 715px;
    margin: 143px 0 0 14px;
    background: #636466;
}
.rail-icons {
    display: flex;
    flex-direction: column;
    gap: 12px;
    margin: 107px 0 0 8px;
}
.hscroll {
    height: 15px;
    margin-right: 23px;
    border-radius: 0 0 6px 0;
    background: #6e6e6c;
}

/* devices */
.devices {
    display: flex;
    margin: 0 15px 0 23px;
    padding: 8px 8px 9px 0;
    background: #515555;
}
.level {
    width: 23px;
    padding: 149px 4px 0;
}
.level.first {
    width: 31px;
    padding: 152px 7px 0 8px;
}
.level b, .level i {
    display: block;
    height: 30px;
    background: linear-gradient(90deg, #1d1f1f 46%, #6a6c6c 46%, #6a6c6c 54%, #1d1f1f 54%);
}
.level i {
    height: 52px;
    background: linear-gradient(90deg, #3ef0d8 46%, #2a9a8e 46%, #2a9a8e 54%, #3ef0d8 54%);
}
.level.first i { margin-top: 8px; height: 45px; }
.level.first b { height: 25px; }
.device {
    min-width: 0;
    display: grid;
    gap: 4px;
    padding: 0 4px 4px;
    height: 376px;
    border-radius: 6px;
    background: #a5a3a0;
}
.reverb {
    flex: 1253 1 0;
    grid-template-columns: 110px 1fr 110px;
    grid-template-rows: 32px 225px 107px;
}
.eq {
    flex: 963 1 0;
    grid-template-columns: 95px 1fr 105px;
    grid-template-rows: 32px 266px 66px;
}
.device header {
    grid-column: 1 / -1;
    display: flex;
    align-items: center;
    padding: 4px 0 0 2px;
}
.power {
    width: 24px;
    height: 24px;
    margin-right: 11px;
    border-radius: 50%;
    border: 1px solid #333;
    background: #ffa508;
}
h2 {
    margin: 0 4px 0 0;
    font-size: 19px;
    font-weight: 500;
    white-space: nowrap;
}
.reverb h2 {
    width: 33%;
}
.tab {
    width: 180px;
    height: 26px;
    gap: 8px;
    border-radius: 12px;
    font-size: 19px;
    color: #c9b9ab;
    background: #191919;
}
.tab.active {
    height: 32px;
    margin-bottom: -6px;
    margin-right: 2px;
    border-radius: 12px 12px 0 0;
    color: #d0d0d0;
}
.square {
    width: 15px;
    height: 15px;
    border: 2px solid #ffa508;
}
.dev-tools {
    display: flex;
    gap: 6px;
    margin-left: auto;
    padding-right: 2px;
}
.dev-tools button {
    width: 24px;
    height: 22px;
    border: 2px solid #3a3a3c;
    border-radius: 5px;
    background: #c8c6c8;
}
.panel {
    background: #8f8e8c;
}
.col, .side {
    grid-row: 2 / 4;
    display: flex;
    flex-direction: column;
    align-items: center;
    padding: 10px 8px 8px;
}
.cell {
    display: flex;
    flex-direction: column;
    align-items: center;
    white-space: nowrap;
    position: relative;
}
.knob {
    width: 50px;
    height: 50px;
}
.knob-track, .knob-value, .knob-hand {
    fill: none;
    stroke: #343233;
    stroke-width: 3;
    stroke-dasharray: 300 360;
}
.knob-value {
    stroke: #2fe6dc;
    stroke-dasharray: calc(var(--v) * 300) 360;
}
.knob-hand {
    stroke-width: 4;
    stroke-dasharray: none;
    transform: rotate(var(--a));
    transform-origin: 25px 25px;
}
.cell.second { margin-top: 24px; }
.eq .cell.second { margin-top: 26px; }
.col .cell.low, .side .cell.low { margin-top: auto; }
.eq .col { padding-top: 4px; }
.dot {
    position: absolute;
    top: 18px;
    width: 7px;
    height: 7px;
    border-radius: 50%;
    background: #2fe6f6;
}
.pair {
    display: flex;
    justify-content: space-between;
    width: 92px;
    margin-top: 12px;
}
.sq {
    width: 42px;
    height: 24px;
    border: 1px solid #222;
}
.sq.light { background: #c4c2c4; }
.sq.on, .field.on { background: #ffa508; }
.bottom-field {
    margin-top: auto;
}
.field {
    display: block;
    width: 92px;
    height: 24px;
    border: 1px solid #222;
    border-radius: 0;
    text-align: center;
    text-align-last: center;
    appearance: none;
    background: #c6c6c8;
}
.opt {
    width: 92px;
    margin-top: 18px;
    text-align: center;
}
.opt .field { margin-top: 3px; }
.side .cell + .opt { margin-top: 10px; }
.eq-side .opt {
    width: 89px;
    margin-top: 9px;
    text-align: left;
    white-space: nowrap;
    font-size: 16px;
}
.eq-side .field { width: 89px; }
.eq-side .pair { width: 89px; margin: 0; }
.eq-side .sq { width: 40px; height: 26px; }
.field.cyan { background: #4df4f0; }
.field.half { background: linear-gradient(90deg, #4df4f0 45%, #cfc6d2 55%); }
.led {
    display: inline-block;
    width: 12px;
    height: 12px;
    margin-left: 2px;
    border-radius: 50%;
    border: 3px solid #2b5a1c;
    background: #7cf04a;
}
.screen {
    position: relative;
    display: flex;
    flex-direction: column;
    background: #1a1a1a;
    color: #c9bfb9;
    font-weight: 400;
}
.screen .ir {
    position: absolute;
    top: 0;
    left: 0;
    width: 100%;
    height: 156px;
    fill: #ffa508;
}
.screen-title {
    padding: 7px 22px 0 0;
    text-align: right;
}
.params {
    display: grid;
    grid-template-columns: 44fr 85fr 100fr 107fr 120fr 133fr 113fr 90fr 110fr 116fr;
    margin-top: auto;
    padding-bottom: 11px;
    white-space: nowrap;
}
.params div {
    display: flex;
    flex-direction: column;
    align-items: center;
    justify-content: space-between;
    height: 52px;
}
.params b {
    font-weight: 400;
    color: #f08a1a;
}
.params em {
    font-style: normal;
}
.params small {
    font-size: 12px;
    margin-left: 52px;
}
.params .divided {
    border-left: 1px solid #999;
}
.params .start {
    align-items: flex-start;
    padding-left: 16px;
}
.lower {
    grid-column: 2;
    display: grid;
    grid-template-columns: 334fr 117fr 559fr;
    column-gap: 4px;
}
.preset {
    padding: 8px 9px 0 8px;
}
.pick {
    display: grid;
    align-items: center;
    margin-bottom: 8px;
}
.pick .field {
    grid-area: 1 / 1;
    width: 100%;
    padding: 0 6px;
    text-align-last: left;
    font-size: 19px;
}
.pick svg {
    grid-area: 1 / 1;
    justify-self: end;
    margin-right: 3px;
    pointer-events: none;
}
.preset-head {
    display: flex;
    justify-content: space-between;
    align-items: center;
    padding: 0 2px;
    height: 26px;
    margin-bottom: 9px;
}
.preset-head span { display: flex; }
.preset-head button {
    width: 29px;
    height: 24px;
    border: 1px solid #222;
    background: #aaa8a8;
}
.knobs {
    display: grid;
    grid-template-columns: repeat(5, 1fr);
    padding: 7px 8px 0;
}
.knobs.one { grid-template-columns: 1fr; }
.eq .screen { grid-column: 2; grid-row: 2; }
.eq .side { grid-column: 3; }
.reverb .side { grid-column: 3; }
.graph svg {
    width: 100%;
    height: 100%;
}
.scale {
    position: absolute;
    left: 0;
    top: 15px;
    width: 40px;
    display: grid;
    grid-auto-rows: 54px;
    text-align: right;
}
.bands {
    grid-column: 2;
    display: grid;
    grid-template-columns: repeat(8, 1fr);
    gap: 4px;
}
.band {
    display: flex;
    flex-direction: column;
    align-items: center;
    gap: 6px;
    padding-top: 8px;
}
.type {
    width: 72px;
    height: 25px;
    border: 1px solid #222;
}
.type.lit { background: #cdd0d0; }
.type svg { width: 70px; height: 23px; }
.band label {
    display: flex;
    align-items: center;
    gap: 12px;
}
.band input {
    width: 20px;
    height: 20px;
    appearance: none;
    border: 1px solid #222;
    background: #bfc1c2;
}
.band input:checked { background: #1fe8ea; }
.drop {
    flex: 542 1 0;
    display: flex;
    align-items: center;
    justify-content: center;
    border-radius: 4px;
    background: #8c8b89;
}

/* status bar */
.status {
    display: flex;
    align-items: flex-start;
    flex: 1;
    padding-right: 14px;
}
.em {
    width: 41px;
    height: 40px;
    margin: 17px 11px 0 16px;
    font-size: 14px;
    font-weight: 700;
    color: #999;
    background: #4c4e4e;
}
.frame {
    height: 44px;
    margin: 16px 17px 0 0;
    padding: 5px;
    border-radius: 7px;
    background: #4b4d4d;
}
.frame.grow { flex: 1; }
.frame.mini { width: 411px; margin-right: 13px; }
.inner {
    display: flex;
    align-items: center;
    gap: 4px;
    height: 34px;
    padding: 0 4px;
    border-radius: 4px;
    background: #8b8a88;
}
.mini .inner {
    justify-content: space-between;
    font-size: 17px;
    background: #979593;
}
.chain {
    display: flex;
    align-items: center;
    gap: 8px;
    width: 335px;
    height: 60px;
    padding: 16px 6px 0 24px;
    border-radius: 0 0 4px 4px;
    background: #4e5252;
    color: #101010;
    font-size: 17px;
    white-space: nowrap;
}
.chips {
    display: flex;
    flex: 1;
    justify-content: space-between;
    height: 32px;
    padding: 3px 8px 7px;
    border-radius: 4px;
    background: #9b9997;
}
.chips b {
    display: flex;
    align-items: center;
    border-radius: 2px;
    background: #262829;
}
.tip {
    width: 40px;
    height: 35px;
    margin: 20px 0 0 14px;
    border-radius: 4px;
    background: #4c4e4f;
}
```

FILE: script.js
```js
// Envelopes: "x,up,down" points, one blob of sound between bars.
const waves = {
    wave0: '23,8,5 26,20,18 32,21,36 40,21,36 44,14,22 48,14,20 51,5,5 54,3,4 60,12,8 66,13,17 75,13,15 81,6,8 87,1,1|93,6,6 95,16,12 101,17,33 106,21,33 109,13,33 112,11,17 142,13,15 146,8,8|154,8,5 156,14,20 165,12,22 168,10,18 174,13,23 179,12,15 181,2,4|187,5,6 191,17,14 197,16,31 217,13,18 240,4,4 245,4,4 248,1,1|254,6,8 260,14,18 283,14,18 290,8,14 295,17,20 300,24,30 304,18,30 309,15,18 315,18,16 320,14,15 332,8,12 338,8,8 344,5,14 348,3,4 351,14,8 353,16,20 360,12,21 370,16,20 375,20,18 380,4,5 386,7,10 390,7,15 399,7,15 403,5,7 415,5,6 420,2,2 428,8,5 436,10,8 437,8,16 445,5,12 462,1,4 472,1,1|502,3,3 512,12,10 518,13,20 530,14,16 552,13,13 555,12,11 560,4,3|571,8,6 575,3,10 578,14,5 583,14,20 605,9,12 619,2,4|626,5,8 632,10,13 640,8,14 648,4,6 655,4,6 660,2,1 668,9,9 685,7,9 700,4,4 722,0,0|776,8,10 779,18,25 786,17,32 796,15,31 800,20,24 808,2,4|815,8,8 820,22,30 828,20,28 838,12,16 855,10,11 878,3,3 886,5,6 890,1,2 892,9,10 900,9,14 910,4,8 925,1,3 932,6,6 938,8,7 965,2,4 977,0,0|1025,8,10 1028,40,40 1031,44,58 1033,40,58 1037,28,20 1040,3,3|1043,15,20 1050,20,30 1058,18,18 1062,21,28 1072,20,36 1080,18,30 1084,8,10 1100,9,10 1110,10,12 1115,14,15 1125,6,10 1133,5,5 1140,14,16 1147,4,4|1154,6,8 1160,11,20 1172,10,16 1180,12,8 1183,2,2|1186,8,8 1192,13,20 1196,12,29 1210,8,25 1225,7,10 1233,2,3 1242,1,2 1250,0,0|1281,8,10 1284,15,20 1288,15,32 1297,10,14 1302,19,24 1308,14,20 1313,3,3|1314,10,10 1320,20,24 1327,24,33 1340,18,28 1348,14,20 1354,14,30 1358,8,18 1362,5,12 1368,9,10 1374,5,10 1380,3,2 1383,5,5 1388,8,10 1410,7,9 1417,5,15 1440,8,13 1460,11,18 1475,6,10 1485,1,1|1526,10,12 1531,17,24 1536,4,14 1539,14,18 1560,12,20 1578,8,10 1581,2,3|1585,10,10 1591,28,30 1596,27,40 1603,22,28 1607,9,10 1612,15,18 1626,22,28 1638,18,30 1642,8,12 1647,3,4 1652,11,15 1657,8,20 1663,8,8 1665,4,5 1672,9,8 1690,7,8 1705,4,4 1716,1,2 1722,5,5 1728,1,1 1736,7,5 1743,1,1|1776,1,1 1782,4,4 1795,1,1|1805,8,8 1810,18,26 1815,14,34 1820,14,20 1824,3,3|1828,8,8 1832,21,24 1836,10,12 1846,12,12 1862,16,14 1867,6,8|1873,8,10 1877,20,30 1884,18,25 1888,3,4|1891,14,18 1896,24,30 1905,27,50 1911,27,56 1917,25,40 1921,15,20 1926,20,22 1948,20,24 1955,14,44 1963,14,24 1966,4,4|1976,6,8 1982,12,14 2005,12,12 2025,11,13 2045,12,8 2050,6,6 2056,5,4 2062,8,8 2080,4,4 2100,0,0|2128,8,10 2135,27,24 2140,8,10 2145,10,16 2152,13,20 2160,12,20 2165,6,6 2170,12,14 2178,25,24 2184,18,26 2193,27,28 2200,10,12 2210,16,20 2218,20,28 2222,34,29 2230,38,29 2245,36,29 2252,20,25 2260,20,16 2265,6,8 2270,4,6 2272,0,0',
    wave1: '22,5,5 29,10,10 32,16,20 38,14,21 46,8,10 52,4,4 58,3,6 62,8,8 72,9,9 80,6,10 86,2,3|91,4,4 94,9,8 101,11,20 108,8,19 112,8,9 130,9,8 140,6,13 144,4,3 148,5,6 153,1,3 157,8,6 165,8,12 178,6,10 184,3,2 186,6,8 192,12,14 200,12,18 220,8,10 238,0,0|280,5,5 285,12,10 295,13,14 305,8,12 313,4,6 318,10,8 324,20,18 328,18,24 335,8,12 340,5,6 345,9,8 360,6,8 372,5,10 376,2,2|378,8,10 382,8,15 393,7,15 395,6,10 430,5,12 432,2,2 441,2,2 447,9,8 452,7,15 475,5,8 497,1,1|534,3,3 540,8,6 546,4,4|547,9,12 555,8,13 575,9,8 590,8,8 593,1,1 600,3,3 610,9,8 614,8,18 622,5,17 626,5,5 645,5,8 675,4,6 700,4,4 728,0,0|760,1,1 767,4,4 774,1,1 784,4,4 790,0,0|793,6,6 800,9,20 808,9,21 813,18,20 817,18,14 820,3,3|831,8,8 836,14,16 845,12,18 862,8,12 880,5,10 884,1,3 908,1,3 910,6,10 940,4,6 970,2,4 976,4,4 998,1,1|1018,1,1 1024,1,3 1030,0,0|1043,3,3 1052,8,10 1056,26,14 1062,24,42 1067,12,40 1071,11,16 1095,7,10 1115,3,4 1118,6,4 1130,6,8 1155,12,11 1180,8,12 1203,4,8 1208,1,2 1215,6,8 1220,12,14 1228,10,18 1250,6,8 1272,1,1|1311,3,8 1320,9,11 1332,9,10 1336,3,3 1342,8,12 1348,10,24 1350,22,25 1356,12,25 1363,9,24 1385,9,12 1390,3,2 1396,4,4 1404,1,1 1407,5,5 1420,7,7 1440,6,14 1460,6,15 1480,6,10 1510,4,4 1523,1,1|1549,8,10 1554,9,16 1560,5,14 1566,16,10 1569,8,18 1590,6,10 1610,2,3|1613,17,15 1620,18,20 1628,9,22 1634,12,12 1638,10,16 1650,9,24 1665,8,24 1670,6,10 1692,4,8 1695,0,0 1704,6,3 1712,1,1 1720,1,1 1722,6,9 1745,3,5 1760,2,2 1772,0,0|1821,3,5 1826,8,18 1830,8,22 1838,8,23 1843,3,4 1848,8,8 1852,10,11 1860,5,10 1870,9,10 1878,8,10 1882,2,3|1884,9,10 1888,12,18 1896,10,17 1901,2,2|1907,10,10 1914,18,24 1922,26,34 1928,20,34 1934,8,20 1937,14,12 1945,13,15 1965,16,20 1974,13,24 1979,10,15 1981,3,3|1986,11,10 2000,10,16 2020,9,16 2022,4,4 2035,4,4 2048,5,4 2060,7,6 2067,4,5 2068,0,1 2100,0,1 2110,1,1|2127,4,6 2133,10,13 2140,4,5 2145,8,10 2152,6,11 2158,8,10 2162,2,2|2168,6,8 2170,13,16 2192,12,15 2199,10,10 2201,2,2 2208,6,8 2216,8,10 2218,16,12 2240,21,14 2248,20,18 2256,8,10 2262,6,12 2272,1,3 2275,0,0',
    wave2: '0,10,8 6,16,14 11,18,20 16,10,14 25,5,8 32,6,8 40,8,6 50,11,8 60,4,6 64,9,8 72,9,18 80,8,17 88,8,6 100,6,4 110,8,7 118,4,6 124,1,1 130,5,5 140,8,7 150,7,6 158,3,4 162,5,6 170,5,8 195,3,4 212,0,0|262,7,8 268,7,12 274,5,8 280,9,12 283,3,3 290,10,10 300,14,18 312,10,16 318,2,3 328,8,6 345,6,6 350,5,4 353,9,8 362,8,12 375,5,8 384,3,4 388,5,5 408,5,6 410,2,1 423,2,2 426,6,8 440,6,9 460,3,5 475,0,0|507,2,4 517,8,9 535,4,6 542,3,2 546,6,6 553,3,3|571,3,2 577,6,6 588,5,9 595,5,12 608,4,9 615,5,5 622,3,7 630,7,3 636,9,9 642,4,5 650,5,5 660,4,4 668,8,5 680,5,8 688,0,0|766,1,1 775,5,5 780,6,20 790,8,21 794,8,12 796,2,2|806,5,8 814,9,10 830,7,10 850,5,6 880,1,2 886,5,6 893,7,9 902,3,4 920,3,4 935,5,5 960,3,3 970,2,2 973,0,0|1025,12,12 1031,24,28 1036,20,30 1041,10,10 1048,12,14 1056,6,8 1060,8,8 1070,12,15 1080,10,18 1088,5,8 1092,8,6 1105,5,7 1118,6,5 1122,1,1 1130,7,8 1140,5,12 1150,2,3 1160,6,9 1168,6,10 1182,2,2 1188,5,6 1192,8,14 1210,6,9 1245,0,0|1283,7,10 1292,8,10 1298,9,8 1305,8,10 1312,6,6 1318,4,4 1324,12,12 1329,14,20 1336,8,18 1340,2,2 1346,8,10 1352,11,15 1360,2,2 1370,3,4 1385,4,5 1392,7,4 1405,3,4 1415,5,4 1425,6,8 1445,3,6 1457,6,10 1467,3,9 1478,1,1|1525,6,8 1532,9,14 1545,9,14 1583,1,2 1586,8,10 1596,15,20 1602,16,20 1605,3,3 1611,8,12 1618,9,17 1640,7,12 1646,2,4 1653,7,8 1661,3,5 1665,3,3 1720,3,3 1728,0,0|1801,8,8 1806,12,24 1813,14,30 1818,6,10 1822,13,8 1828,8,9 1850,5,8 1860,1,3 1870,7,8 1877,2,3|1882,12,10 1890,16,22 1897,21,24 1905,14,20 1908,2,4|1912,12,15 1917,10,18 1930,5,12 1940,8,8 1950,7,9 1953,2,2 1962,5,6 1965,9,9 1985,12,11 2005,11,10 2015,14,11 2020,4,4 2032,4,4 2045,6,5 2060,3,3 2070,2,2 2073,0,0|2135,8,5 2142,12,10 2150,8,8 2154,1,1 2162,6,5 2172,7,9 2178,3,4 2188,5,6 2205,4,8 2215,10,8 2230,14,12 2245,8,10 2249,3,3 2295,3,3 2303,5,5 2309,5,5',
    wave3: '9,8,8 14,19,14 24,18,14 33,12,15 40,4,8 47,2,2 52,10,14 65,10,14 71,4,4 75,9,8 82,10,16 90,9,22 98,8,18 110,7,12 125,9,8 130,4,5 132,1,1|141,3,3 144,7,7 165,5,7 168,1,3 171,8,10 176,12,18 200,7,12 229,0,0|271,7,8 280,6,10 290,5,6 300,8,8 310,11,10 320,9,15 324,5,14 330,3,3 360,3,3 368,7,10 378,5,10 384,3,3 400,3,3 430,3,3 438,8,6 448,4,4 480,2,4 512,2,5 520,1,2 570,2,2 580,5,4 590,4,4 593,10,8 600,9,12 610,7,10 640,5,5 660,4,4 680,3,2 690,5,3 705,2,2 745,0,1 755,2,4 762,0,0|771,2,3 780,8,8 787,11,18 798,11,14 804,3,3 813,3,3 818,12,10 830,9,15 840,6,10 845,3,4 860,4,3 890,3,3 894,7,8 900,7,10 908,5,5 925,3,3 950,2,3 955,0,0|1038,6,6 1044,20,26 1050,16,28 1054,6,6 1058,12,10 1070,6,8 1082,9,12 1092,5,14 1098,3,6 1112,2,3 1120,6,6 1130,7,6 1136,2,4 1140,6,8 1148,8,10 1153,3,4 1180,3,3 1198,3,3 1204,9,10 1212,8,12 1235,4,6 1252,0,0|1292,8,8 1298,10,15 1308,13,13 1312,12,10 1318,5,5 1330,8,6 1333,9,10 1345,6,12 1360,4,6 1380,3,5 1400,4,4 1430,3,5 1460,3,4 1500,2,2 1505,0,0|1535,4,6 1542,7,11 1548,4,4 1554,12,9 1560,8,8 1575,5,7 1590,3,4 1598,8,10 1603,16,16 1612,12,18 1618,9,10 1622,4,18 1630,10,22 1648,9,14 1653,4,8 1675,3,4 1700,2,3 1715,4,3 1735,4,5 1740,1,1 1746,4,5 1752,0,0|1809,8,8 1814,12,12 1822,10,8 1828,5,5 1832,11,12 1838,6,8 1845,10,10 1855,11,10 1866,8,8 1870,2,3 1877,10,10 1884,9,12 1887,2,3|1894,12,12 1900,14,22 1909,18,30 1915,12,20 1918,2,4 1924,10,8 1940,12,12 1960,11,19 1965,4,8|1976,4,8 1982,8,9 2000,6,8 2050,4,5 2080,2,3 2115,0,1 2135,2,2 2145,0,0|2182,8,8 2186,16,16 2192,13,22 2200,12,22 2208,10,10 2212,7,8 2309,7,8',
    ir: '12,3,3 20,5,7 30,7,9 31,14,18 34,8,9 40,14,12 44,8,10 52,14,16 55,9,11 56,9,12 57,72,30 58,72,64 59,12,14 64,14,12 68,9,18 70,14,20 74,30,28 76,73,45 77,73,66 80,30,30 84,9,14 88,12,12 90,9,24 94,18,9 96,8,14 100,12,16 104,7,9 110,8,14 114,14,9 118,8,9 121,22,14 124,42,36 127,20,14 131,6,8 140,5,12 150,14,11 155,7,12 160,5,7 172,5,5 177,11,12 184,5,10 190,8,7 197,11,8 204,4,4 213,7,6 225,3,4 232,5,5 238,12,12 242,4,4 250,5,5 254,23,10 258,8,6 264,4,4 271,9,8 276,3,3 282,5,5 290,4,4 294,16,11 299,4,4 315,3,3 320,11,7 326,3,8 334,3,3 340,7,5 345,3,2 360,4,3 370,4,4 374,2,2 395,2,2 400,7,6 405,2,2 417,2,2 418,13,5 421,13,7 423,2,3 429,11,7 434,3,3 438,9,5 442,2,2 473,2,2 478,7,6 484,2,2 490,3,2 503,2,2 505,9,8 507,2,2 519,2,2 522,7,4 526,2,2 530,5,4 534,2,2 537,4,3 541,2,2 580,2,2 584,4,4 588,2,2 626,2,2 630,5,4 635,2,2 640,5,5 645,2,2 717,2,2 723,7,6 729,2,2 736,2,2 740,5,4 744,2,2 770,2,2 773,9,5 776,2,2 785,4,3 790,2,2 834,2,2 836,1,1 842,3,3 846,1,1 849,3,3 852,2,2 903,2,2 907,6,4 911,1,1 922,3,3 930,2,2 1018,0,1'
};

Object.keys(waves).forEach(id => {
    const svg = document.getElementById(id);
    let d = '';
    waves[id].split('|').forEach(blob => {
        const pts = blob.split(' ').map(p => p.split(',').map(Number));
        const first = pts[0][0] - 2;
        const last = pts[pts.length - 1][0] + 2;
        const top = pts.map(p => `${p[0]} ${-p[1]}`).join(' ');
        const bottom = pts.reverse().map(p => `${p[0]} ${p[2]}`).join(' ');
        d += `M${first} 0L${top} ${last} 0 ${bottom}z`;
    });
    if (id !== 'ir') {
        d += 'M-3 -1H2309V1H-3z';
    }
    svg.innerHTML = `<path d="${d}"/>`;
});

// Diamonds in the clip preview
const beads = [6, 17, 28, 39, 51, 77, 94, 114, 126, 138, 152, 173, 192, 211, 230, 262];
document.getElementById('beads').innerHTML = '<path d="M2 7.5H56v1H2zM90 7.5h64v1H90z" fill="#3b3536"/>' +
    beads.map(x => `<path d="M${x} 2l7 6-7 6-7-6z" fill="#3b3536"/>`).join('');
```
